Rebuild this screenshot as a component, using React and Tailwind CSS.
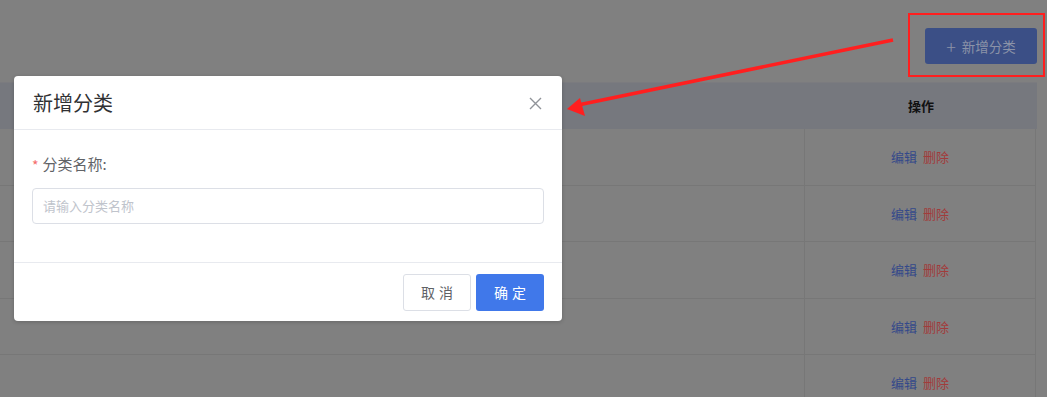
import React from "react";

const rows = [0, 1, 2, 3, 4];

export default function App() {
  return (
    <div
      className="relative w-[1047px] h-[397px] overflow-hidden bg-[#808080]"
      style={{ fontFamily: '"Noto Sans CJK SC", "Noto Sans", sans-serif' }}
    >
      {/* top bar */}
      <div className="h-[82px] flex items-start justify-end pr-[10px] pt-[28px]">
        <button className="w-[112px] h-[36px] rounded-[3px] bg-[#3b4f86] text-[#8b93a8] text-[13.5px] flex items-center justify-center gap-[6px]">
          <span className="text-[18px] leading-none font-light">+</span>
          <span>新增分类</span>
        </button>
      </div>

      {/* table */}
      <div className="w-[1037px]">
        <div className="h-[47px] bg-[#76787e] border-t border-[#7b7b7f] flex">
          <div className="w-[805px]" />
          <div className="flex-1 flex items-center justify-center text-[13px] font-bold text-[#111]">
            操作
          </div>
        </div>
        {rows.map((r) => (
          <div
            key={r}
            className="h-[56.5px] flex border-b border-r border-[#777777] w-[1036px]"
          >
            <div className="w-[805px] border-r border-[#777777]" />
            <div className="flex-1 flex items-center justify-center gap-[6px] text-[13px]">
              <span className="text-[#34498a]">编辑</span>
              <span className="text-[#a23b3b]">删除</span>
            </div>
          </div>
        ))}
      </div>

      {/* red highlight box */}
      <div className="absolute left-[908px] top-[13px] w-[137px] h-[64px] border-2 border-[#ff1f1f]" />

      {/* arrow */}
      <svg className="absolute left-0 top-0" width="1047" height="397">
        <line x1="893" y1="40" x2="578" y2="105" stroke="#ff1f1f" strokeWidth="3.5" />
        <polygon points="567,109 580,98 585,116" fill="#ff1f1f" />
      </svg>

      {/* modal */}
      <div className="absolute left-[14px] top-[76px] w-[548px] h-[245px] bg-white rounded-[4px] shadow-[0_1px_4px_rgba(0,0,0,0.2)] flex flex-col">
        <div className="h-[54px] border-b border-[#e8eaef] flex items-center justify-between pl-[19px] pr-[20px]">
          <span className="text-[20px] text-[#303133]">新增分类</span>
          <svg width="13" height="13" viewBox="0 0 13 13" className="mt-[2px]">
            <path d="M1 1L12 12M12 1L1 12" stroke="#909399" strokeWidth="1.4" />
          </svg>
        </div>
        <div className="flex-1 border-b border-[#e8eaef] px-[18px] pt-[23px]">
          <div className="flex items-center h-[22px] text-[15px] text-[#606266]">
            <span className="text-[#f56c6c] mr-[4px] text-[14px] mt-[2px]">*</span>
            <span>分类名称:</span>
          </div>
          <div className="mt-[13px] h-[36px] border border-[#dcdfe6] rounded-[4px] flex items-center px-[10px] text-[13px] text-[#c0c4cc]">
            请输入分类名称
          </div>
        </div>
        <div className="h-[58px] flex items-center justify-end gap-[5px] pr-[18px]">
          <button className="w-[68px] h-[37px] border border-[#dcdfe6] rounded-[3px] text-[14px] text-[#606266] tracking-[4px] pl-[4px]">
            取消
          </button>
          <button className="w-[68px] h-[37px] rounded-[3px] bg-[#4078ea] text-[14px] text-white tracking-[4px] pl-[4px]">
            确定
          </button>
        </div>
      </div>
    </div>
  );
}
